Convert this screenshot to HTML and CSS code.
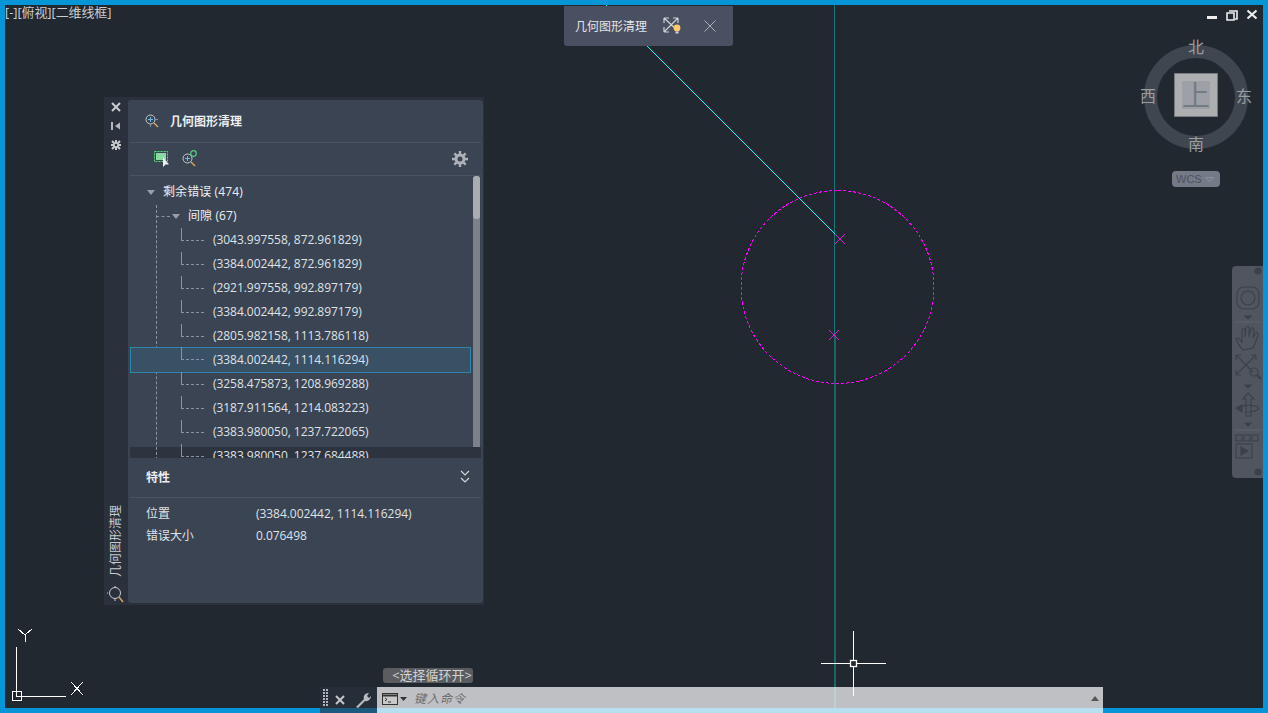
FILE: index.html
```html
<!DOCTYPE html>
<html lang="zh-CN">
<head>
  <meta charset="UTF-8">
  <title>几何图形清理</title>
  <link rel="stylesheet" href="styles.css">
</head>
<body>
  <div class="viewport">
    <svg class="drawing" width="1268" height="713" viewBox="0 0 1268 713">
      <line x1="834.5" y1="5" x2="834.5" y2="335" stroke="#157577" stroke-width="1"/>
      <line x1="835" y1="335" x2="835" y2="708" stroke="#1a6668" stroke-width="2"/>
      <line x1="647" y1="46" x2="840" y2="239" stroke="#00ffff" stroke-width="1"/>
      <rect x="606" y="5" width="1" height="1" fill="#00ffff"/>
      <circle cx="837.5" cy="287" r="96.5" fill="none" stroke="#ff00ff" stroke-width="1" stroke-dasharray="3 2"/>
      <path d="M835 234l10 10M845 234l-10 10M829 330l10 10M839 330l-10 10" stroke="#d020d0" stroke-width="1"/>
      <path d="M16.500 647v49.500H66M71 682l12 13M83 682l-12 13M18 629l7 6 7-6M25 635v7" fill="none" stroke="#fff" stroke-width="1"/>
      <rect x="12.500" y="691.500" width="9" height="9" fill="none" stroke="#fff" stroke-width="1"/>
    </svg>

    <div class="view-label">[-][俯视][二维线框]</div>

    <div class="win-controls">
      <svg width="56" height="14" viewBox="0 0 56 14">
        <path d="M2 8h10v3H2z" fill="#eee"/>
        <path d="M24 3h8v8h-2M22 5h7v7h-7z" fill="none" stroke="#eee" stroke-width="1.600"/>
        <path d="M42.500 2.500l9 8M51.500 2.500l-9 8" stroke="#eee" stroke-width="2.200"/>
      </svg>
    </div>

    <div class="flyout">
      <span class="flyout-title">几何图形清理</span>
      <svg class="flyout-icon" width="20" height="20" viewBox="0 0 20 20">
        <path d="M1 2l13 12M15 2L1 16M1 2v5M1 2h5M15 2v5M15 2h-5M1 16v-5M1 16h5" fill="none" stroke="#d0d3d8" stroke-width="1.200"/>
        <circle cx="14" cy="12" r="3.400" fill="#fdc96a"/>
        <rect x="12.500" y="15.500" width="3" height="2" fill="#d0d3d8"/>
      </svg>
      <svg width="12" height="12" viewBox="0 0 12 12">
        <path d="M.5.5l11 11M11.500.5l-11 11" stroke="#a8adb6" stroke-width="1"/>
      </svg>
    </div>

    <div class="panel-window">
      <div class="side-strip">
        <div class="strip-top">
          <svg width="12" height="12" viewBox="0 0 12 12"><path d="M2 2l8 8M10 2l-8 8" stroke="#c8ccd0" stroke-width="2"/></svg>
          <svg width="12" height="12" viewBox="0 0 12 12"><path d="M1 2h2v8H1z" fill="#b5b9be"/><path d="M5 6l5-3.500v7z" fill="#b5b9be"/></svg>
          <svg width="12" height="12" viewBox="0 0 12 12"><path d="M2 2l8 8M10 2l-8 8M6 1v10M1 6h10" stroke="#c8ccd0" stroke-width="2"/><circle cx="6" cy="6" r="1.300" fill="#2a313c"/></svg>
        </div>
        <div class="strip-label">几何图形清理</div>
        <svg class="strip-icon" width="18" height="18" viewBox="0 0 18 18">
          <circle cx="8" cy="7" r="5.500" fill="none" stroke="#c8ccd0"/>
          <path d="M8 0v2M8 12v3M1 7H0" stroke="#c8ccd0"/>
          <path d="M12 11l4 5" stroke="#d9a45c" stroke-width="1.500"/>
        </svg>
      </div>
      <div class="panel">
        <div class="panel-head">
          <svg width="17" height="17" viewBox="0 0 17 17">
            <circle cx="6.500" cy="6.500" r="4.500" fill="none" stroke="#c8ccd0"/>
            <path d="M6.500 4v5M4 6.500h5" stroke="#6fb8e0"/>
            <path d="M6.500 11v3M11 6.500h3" stroke="#8a9098"/>
            <path d="M10 10l4 4" stroke="#d9a45c" stroke-width="1.500"/>
          </svg>
          <span class="panel-title">几何图形清理</span>
        </div>
        <div class="panel-tools">
          <svg width="18" height="18" viewBox="0 0 18 18">
            <rect x="1.500" y="1.500" width="13" height="10" fill="none" stroke="#58e07e" stroke-dasharray="2 1"/>
            <rect x="3" y="3" width="10" height="7" fill="#8ad9a2"/>
            <path d="M10 7v10l2.500-2.500 3.500 0z" fill="#eee"/>
          </svg>
          <svg width="18" height="18" viewBox="0 0 18 18">
            <circle cx="6.500" cy="8.500" r="4.500" fill="none" stroke="#c8ccd0"/>
            <path d="M6.500 6v5M4 8.500h5" stroke="#6fb8e0"/>
            <path d="M10 12l4 4" stroke="#d9a45c" stroke-width="1.500"/>
            <circle cx="12.500" cy="3.500" r="2.800" fill="none" stroke="#58d07e" stroke-width="1.200"/>
          </svg>
          <svg class="gear" width="16" height="16" viewBox="0 0 16 16">
            <circle cx="8" cy="8" r="4" fill="none" stroke="#aeb2b8" stroke-width="3"/>
            <path d="M8 0v3M8 13v3M0 8h3M13 8h3M2.300 2.300l2.100 2.100M11.600 11.600l2.100 2.100M13.700 2.300l-2.100 2.100M4.400 11.600l-2.100 2.100" stroke="#aeb2b8" stroke-width="2.400"/>
          </svg>
        </div>
        <div class="tree-wrap">
          <div class="tree">
            <div class="tree-guide"></div>
            <div class="row level-0"><i class="caret"></i>剩余错误 (474)</div>
            <div class="row level-1"><i class="dash"></i><i class="caret"></i>间隙 (67)</div>
            <div class="row leaf">(3043.997558, 872.961829)</div>
            <div class="row leaf">(3384.002442, 872.961829)</div>
            <div class="row leaf">(2921.997558, 992.897179)</div>
            <div class="row leaf">(3384.002442, 992.897179)</div>
            <div class="row leaf">(2805.982158, 1113.786118)</div>
            <div class="row leaf selected">(3384.002442, 1114.116294)</div>
            <div class="row leaf">(3258.475873, 1208.969288)</div>
            <div class="row leaf">(3187.911564, 1214.083223)</div>
            <div class="row leaf">(3383.980050, 1237.722065)</div>
            <div class="row leaf">(3383.980050, 1237.684488)</div>
          </div>
          <div class="scrollbar"><div class="thumb"></div></div>
        </div>
        <div class="props-head">
          <span>特性</span>
          <svg width="10" height="14" viewBox="0 0 10 14"><path d="M1 1l4 4 4-4M1 8l4 4 4-4" fill="none" stroke="#d0d3d8" stroke-width="1.200"/></svg>
        </div>
        <div class="props">
          <div class="prop"><span class="prop-name">位置</span><span>(3384.002442, 1114.116294)</span></div>
          <div class="prop"><span class="prop-name">错误大小</span><span>0.076498</span></div>
        </div>
      </div>
    </div>

    <div class="viewcube">
      <div class="ring"></div>
      <span class="dir north">北</span>
      <span class="dir south">南</span>
      <span class="dir east">东</span>
      <span class="dir west">西</span>
      <div class="cube"><div class="cube-face">上</div></div>
    </div>
    <div class="wcs">WCS <svg width="9" height="5" viewBox="0 0 9 5"><path d="M.5.5h8L4.500 4.500z" fill="none" stroke="#8d929e"/></svg></div>

    <div class="navbar">
      <svg width="31" height="212" viewBox="0 0 31 212" fill="none" stroke="#3c414a" stroke-width="1.200">
        <circle cx="26" cy="5" r="3" fill="#3c414a"/>
        <rect x="5" y="21" width="22" height="22" rx="7"/>
        <circle cx="16" cy="32" r="7"/>
        <path d="M13 50h6l-3 3z" fill="#3c414a"/>
        <path d="M2 56h28" stroke="#5c616b"/>
        <path d="M11 84c-3-3-6-8-7-11 1-2 3-1 4 1l2 2V64c1-2 3-1 3 0v7l1-9c1-2 3-2 3 0v9l2-8c1-2 3-1 3 1l-1 8 3-5c1-1 3 0 2 2l-3 9-2 4z"/>
        <path d="M5 90l16 16M23 90L5 108M4 89h5M4 89v5M24 89h-5M24 89v5M4 109h5M4 109v-5"/>
        <circle cx="22" cy="106" r="4"/>
        <path d="M25 109l4 4" stroke-width="2.400"/>
        <path d="M13 119h6l-3 3z" fill="#3c414a"/>
        <path d="M16 127l-5 6h3v17h5v-17h3zM5 142c3-3 19-4 22 0-2 4-9 4-13 4"/>
        <path d="M4 142l6-3v7z" fill="#3c414a"/>
        <path d="M13 157h6l-3 3z" fill="#3c414a"/>
        <path d="M2 164h28" stroke="#5c616b"/>
        <rect x="4" y="169" width="6" height="6"/><rect x="12" y="169" width="6" height="6"/><rect x="20" y="169" width="6" height="6"/>
        <rect x="4" y="178" width="16" height="14"/>
        <path d="M9 181l7 4-7 4z" fill="#3c414a"/>
        <circle cx="26" cy="206" r="3" fill="#3c414a"/>
      </svg>
    </div>

    <div class="cycle-tip">&lt;选择循环开&gt;</div>

    <div class="command">
      <div class="cmd-tools">
        <span class="grip"></span>
        <svg class="cmd-close" width="10" height="10" viewBox="0 0 10 10"><path d="M1 1l8 8M9 1l-8 8" stroke="#c4c7cb" stroke-width="2"/></svg>
        <svg class="cmd-wrench" width="16" height="16" viewBox="0 0 16 16"><path d="M1 15l8-8c-1-3 1-6 5-6l-2 3 2 2 2-2c0 3-3 6-6 5l-7 7z" fill="#b8bbc0"/></svg>
      </div>
      <div class="cmd-input">
        <svg width="26" height="12" viewBox="0 0 26 12">
          <rect x=".5" y=".5" width="15" height="11" fill="#c9c9c9" stroke="#333"/>
          <path d="M1 2.500h14" stroke="#333" stroke-width="2"/>
          <path d="M3 5l2 1.500L3 8M6 9h3" fill="none" stroke="#333"/>
          <path d="M18 4h7l-3.500 4z" fill="#333"/>
        </svg>
        <span class="cmd-text">键入命令</span>
        <i class="cmd-arrow"></i>
      </div>
    </div>

    <svg class="crosshair" width="66" height="66" viewBox="0 0 66 66">
      <path d="M33.500 1v29M33.500 37v29M1 33.500h29M37 33.500h29" stroke="#fff" stroke-width="1"/>
      <rect x="30.500" y="30.500" width="6" height="6" fill="none" stroke="#fff" stroke-width="1.300"/>
    </svg>
  </div>
</body>
</html>
```

FILE: styles.css
```css
* {
  box-sizing: border-box;
}
html, body {
  margin: 0;
  height: 100%;
  overflow: hidden;
}
body {
  font-family: "Open Sans", "Noto Sans CJK SC", sans-serif;
  font-size: 12px;
  color: #dfe2e6;
}
.viewport {
  position: relative;
  width: 1268px;
  height: 713px;
  background: #212830;
  border: 5px solid #0696d7;
}
.drawing {
  position: absolute;
  left: -5px;
  top: -5px;
  shape-rendering: crispEdges;
}
.view-label {
  position: absolute;
  left: 0;
  top: -1px;
  font-size: 13px;
  line-height: 16px;
  letter-spacing: -.1px;
  color: #c9ced3;
  white-space: nowrap;
}
.win-controls {
  position: absolute;
  left: 1200px;
  top: 3px;
}
.flyout {
  position: absolute;
  left: 559px;
  top: 1px;
  width: 169px;
  height: 40px;
  background: #495062;
  border-radius: 0 0 3px 3px;
  display: flex;
  align-items: center;
  padding-left: 11px;
}
.flyout-title {
  font-size: 12px;
  color: #e4e6ea;
  width: 88px;
}
.flyout-icon {
  margin-right: 21px;
}

/* palette */
.panel-window {
  position: absolute;
  left: 99px;
  top: 92px;
  width: 380px;
  height: 508px;
  display: flex;
  background: #2a313c;
  padding: 3px 1px 2px 0;
}
.side-strip {
  width: 24px;
  display: flex;
  flex-direction: column;
  align-items: center;
  flex: none;
}
.strip-top {
  display: flex;
  flex-direction: column;
  align-items: center;
  gap: 7px;
  margin-top: 1px;
}
.strip-label {
  margin-top: auto;
  writing-mode: vertical-rl;
  text-orientation: sideways;
  transform: rotate(180deg);
  font-size: 12px;
  line-height: 16px;
  color: #c6cad0;
}
.strip-icon {
  margin: 9px 0 -1px;
}
.panel {
  flex: 1;
  display: flex;
  flex-direction: column;
  background: #3b4453;
  border-radius: 3px;
  min-width: 0;
  padding: 0 2px;
}
.panel-head {
  height: 43px;
  flex: none;
  display: flex;
  align-items: center;
  gap: 9px;
  padding-left: 14px;
  border-bottom: 1px solid #4a5361;
}
.panel-title {
  font-weight: 700;
  font-size: 12px;
  color: #eceef0;
}
.panel-tools {
  height: 33px;
  flex: none;
  display: flex;
  align-items: center;
  gap: 10px;
  padding-left: 23px;
  border-bottom: 1px solid #4a5361;
}
.gear {
  margin-left: auto;
  margin-right: 13px;
}
.tree-wrap {
  height: 282px;
  flex: none;
  display: flex;
  background: linear-gradient(#3b4453 271px, #2e343f 271px);
}
.tree {
  position: relative;
  width: 341px;
  flex: none;
  overflow: hidden;
  padding-top: 4px;
}
.tree-guide {
  position: absolute;
  left: 26px;
  top: 29px;
  height: 260px;
  border-left: 1px dashed #8b93a0;
}
.row {
  position: relative;
  height: 24px;
  line-height: 24px;
  white-space: nowrap;
  letter-spacing: -.05px;
  color: #dfe2e6;
  display: flex;
  align-items: center;
}
.level-0 {
  padding-left: 17px;
  color: #eceef0;
  letter-spacing: .1px;
}
.level-1 {
  padding-left: 26px;
  color: #eceef0;
  letter-spacing: .1px;
}
.dash {
  width: 14px;
  border-top: 1px dashed #8b93a0;
  margin-right: 2px;
}
.caret {
  width: 0;
  height: 0;
  border: solid transparent;
  border-width: 5px 4px 0;
  border-top-color: #9aa0aa;
  margin-right: 8px;
}
.leaf {
  padding-left: 83px;
}
.leaf::before {
  content: "";
  position: absolute;
  left: 51px;
  top: 0;
  width: 22px;
  height: 12px;
  border-left: 1px solid #8b93a0;
  border-bottom: 1px dashed #8b93a0;
}
.selected {
  background: #3a5064;
  outline: 1px solid #2e86ad;
  outline-offset: -1px;
  height: 26px;
  margin: -1px 0;
}
.scrollbar {
  width: 7px;
  height: 271px;
  margin-left: 2px;
  background: #7c818a;
  border-radius: 3px 3px 0 0;
}
.thumb {
  height: 43px;
  background: #a9adb3;
  border-radius: 3px;
}
.props-head {
  height: 40px;
  flex: none;
  display: flex;
  align-items: center;
  justify-content: space-between;
  padding: 0 11px 2px 16px;
  font-weight: 700;
  border-bottom: 1px solid #4a5361;
  color: #eceef0;
}
.props {
  padding-top: 4px;
  letter-spacing: -.05px;
  color: #dfe2e6;
}
.prop {
  display: flex;
  height: 22px;
  align-items: center;
  padding-left: 16px;
}
.prop-name {
  width: 110px;
  flex: none;
}

/* view cube */
.viewcube {
  position: absolute;
  left: 1134px;
  top: 33px;
  width: 114px;
  height: 118px;
}
.ring {
  position: absolute;
  left: 5px;
  top: 7px;
  width: 104px;
  height: 104px;
  border: 13px solid #3f4650;
  border-radius: 50%;
}
.cube {
  position: absolute;
  left: 35px;
  top: 35px;
  width: 44px;
  height: 44px;
  background: #acaeb0;
  border: 1px solid #757b80;
  padding: 7px;
}
.cube-face {
  height: 100%;
  background: #9da0a6;
  font-size: 28px;
  line-height: 28px;
  text-align: center;
  color: #757a80;
}
.dir {
  position: absolute;
  font-size: 16px;
  line-height: 18px;
  color: #9a9da0;
}
.north { left: 49px; top: 0; }
.south { left: 49px; top: 97px; }
.east { left: 97px; top: 49px; }
.west { left: 1px; top: 49px; }
.wcs {
  position: absolute;
  left: 1167px;
  top: 166px;
  width: 48px;
  height: 16px;
  background: #757a88;
  border-radius: 4px;
  font-family: "Liberation Sans", sans-serif;
  font-size: 11px;
  line-height: 15px;
  color: #4d525c;
  padding-left: 4px;
  display: flex;
  align-items: center;
  gap: 3px;
}

/* nav bar */
.navbar {
  position: absolute;
  left: 1227px;
  top: 261px;
  width: 31px;
  height: 212px;
  background: #50555f;
  border-radius: 4px 0 0 4px;
}
.navbar svg {
  display: block;
}

/* command line */
.cycle-tip {
  position: absolute;
  left: 378px;
  top: 663px;
  width: 90px;
  height: 15px;
  background: #5a5c60;
  border-radius: 3px;
  font-size: 13px;
  line-height: 15px;
  color: #d0d2d4;
  text-align: right;
  padding-right: 1px;
  white-space: nowrap;
}
.command {
  position: absolute;
  left: 315px;
  top: 682px;
  width: 783px;
  height: 26px;
  display: flex;
}
.cmd-tools {
  width: 57px;
  flex: none;
  background: rgba(41,50,65,.6);
  display: flex;
  align-items: flex-start;
  padding: 2px 0 0 3px;
}
.grip {
  width: 5px;
  height: 18px;
  background:
    linear-gradient(90deg, transparent 2px, #262e3a 2px) 0 0/3px 3px,
    linear-gradient(#b0b3b8 2px, transparent 2px) 0 0/3px 3px;
}
.cmd-close {
  margin: 6px 0 0 7px;
}
.cmd-wrench {
  margin: 3px 0 0 10px;
}
.cmd-input {
  flex: 1;
  background: rgba(249,249,249,.73);
  display: flex;
  align-items: flex-start;
  padding: 6px 4px 0 5px;
  gap: 6px;
}
.cmd-text {
  font-style: italic;
  font-size: 12px;
  line-height: 12px;
  color: #6b6b6b;
  letter-spacing: 1px;
}
.cmd-arrow {
  margin: 3px 0 0 auto;
  width: 0;
  height: 0;
  border: solid transparent;
  border-width: 0 4px 5px;
  border-bottom-color: #555;
}
.crosshair {
  position: absolute;
  left: 815px;
  top: 625px;
}
```
